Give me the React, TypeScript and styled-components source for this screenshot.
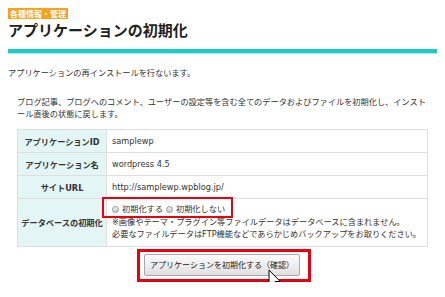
import React from "react";
import styled, { createGlobalStyle } from "styled-components";

const Global = createGlobalStyle`
  html, body { background: #fff; }
  body {
    margin: 8px;
    font-family: "DejaVu Sans", "Noto Sans CJK JP", sans-serif;
    color: #333;
    font-size: 8.2px;
  }
`;

const Page = styled.div`
  position: relative;
`;

const Header = styled.div`
  display: flex;
  flex-direction: column;
  align-items: flex-start;
`;

const Badge = styled.span`
  display: inline-block;
  background: #f8a11d;
  color: #fff;
  font-weight: bold;
  font-size: 8px;
  line-height: 11px;
  padding: 0 2px;
  font-family: "Noto Sans CJK JP", sans-serif;
`;

const Title = styled.h1`
  margin: 1px 0 0;
  font-size: 15px;
  line-height: 20px;
  font-weight: bold;
  color: #222;
  font-family: "Noto Sans CJK JP", sans-serif;
`;

const Rule = styled.div`
  height: 4px;
  background: #1ecbc2;
  margin-top: 9px;
  box-shadow: 0 1px 0 #a6ebe6;
`;

const Lead = styled.p`
  margin: 13px 0 0;
  line-height: 14px;
`;

const Note = styled.p`
  margin: 16px 0 0 9px;
  max-width: 414px;
  line-height: 12px;
`;

const Table = styled.table`
  margin: 9px 0 0 9px;
  width: 411px;
  border-collapse: collapse;
`;

const Th = styled.th`
  width: 88px;
  background: #e4f5f5;
  border: 1px solid #dedede;
  font-weight: bold;
  text-align: center;
  height: 22px;
  padding: 0;
  color: #333;
`;

const Td = styled.td`
  border: 1px solid #dedede;
  padding: 0 5px;
  line-height: 12px;
  color: #333;
`;

const TallTd = styled(Td)`
  padding: 4px 5px 6px;
`;

const RadioGroup = styled.span`
  position: relative;
  display: inline-flex;
  align-items: center;
  gap: 3px;
  &::after {
    content: "";
    position: absolute;
    left: -10px;
    right: -8px;
    top: -6px;
    bottom: -3px;
    border: 2px solid #e50012;
    pointer-events: none;
  }
`;

const RadioLabel = styled.label`
  display: inline-flex;
  align-items: center;
  gap: 3px;
`;

const RadioDot = styled.span`
  width: 7px;
  height: 7px;
  box-sizing: border-box;
  border-radius: 50%;
  border: 1px solid #9a9a9a;
  background: linear-gradient(#f0f0f0, #c8c8c8);
`;

const Line = styled.div``;

const ButtonRow = styled.div`
  display: flex;
  justify-content: center;
  margin-top: 2px;
`;

const Highlight = styled.div`
  position: relative;
  border: 3px solid #e50012;
  padding: 2px 8px 3px 4px;
  margin-left: 3px;
`;

const Button = styled.button`
  display: block;
  width: 156px;
  height: 22px;
  border: 1px solid #a8a8a8;
  border-radius: 2px;
  background: linear-gradient(#fbfbfb, #e0e0e0);
  font-family: "Noto Sans CJK JP", sans-serif;
  font-size: 8px;
  color: #222;
  padding: 0;
`;

const Cursor = styled.svg`
  position: absolute;
  left: 128px;
  top: 17px;
`;

const rows = [
  { label: "アプリケーションID", value: "samplewp" },
  { label: "アプリケーション名", value: "wordpress 4.5" },
  { label: "サイトURL", value: "http://samplewp.wpblog.jp/" },
];

export default function App() {
  return (
    <Page>
      <Global />
      <Header>
        <Badge>各種情報・管理</Badge>
        <Title>アプリケーションの初期化</Title>
      </Header>
      <Rule />
      <Lead>アプリケーションの再インストールを行ないます。</Lead>
      <Note>
        ブログ記事、ブログへのコメント、ユーザーの設定等を含む全てのデータおよびファイルを初期化し、インストール直後の状態に戻します。
      </Note>
      <Table>
        <tbody>
          {rows.map((r) => (
            <tr key={r.label}>
              <Th>{r.label}</Th>
              <Td>{r.value}</Td>
            </tr>
          ))}
          <tr>
            <Th>データベースの初期化</Th>
            <TallTd>
              <Line>
                <RadioGroup>
                  <RadioLabel>
                    <RadioDot />
                    初期化する
                  </RadioLabel>
                  <RadioLabel>
                    <RadioDot />
                    初期化しない
                  </RadioLabel>
                </RadioGroup>
              </Line>
              <Line>※画像やテーマ・プラグイン等ファイルデータはデータベースに含まれません。</Line>
              <Line>必要なファイルデータはFTP機能などであらかじめバックアップをお取りください。</Line>
            </TallTd>
          </tr>
        </tbody>
      </Table>
      <ButtonRow>
        <Highlight>
          <Button>アプリケーションを初期化する（確認）</Button>
          <Cursor width="14" height="22" viewBox="0 0 14 22">
            <path
              d="M1 1 L1 17 L4.8 13.3 L7.4 19.6 L9.8 18.6 L7.2 12.5 L12.3 12.5 Z"
              fill="#fff"
              stroke="#000"
              strokeWidth="1"
              strokeLinejoin="miter"
            />
          </Cursor>
        </Highlight>
      </ButtonRow>
    </Page>
  );
}
